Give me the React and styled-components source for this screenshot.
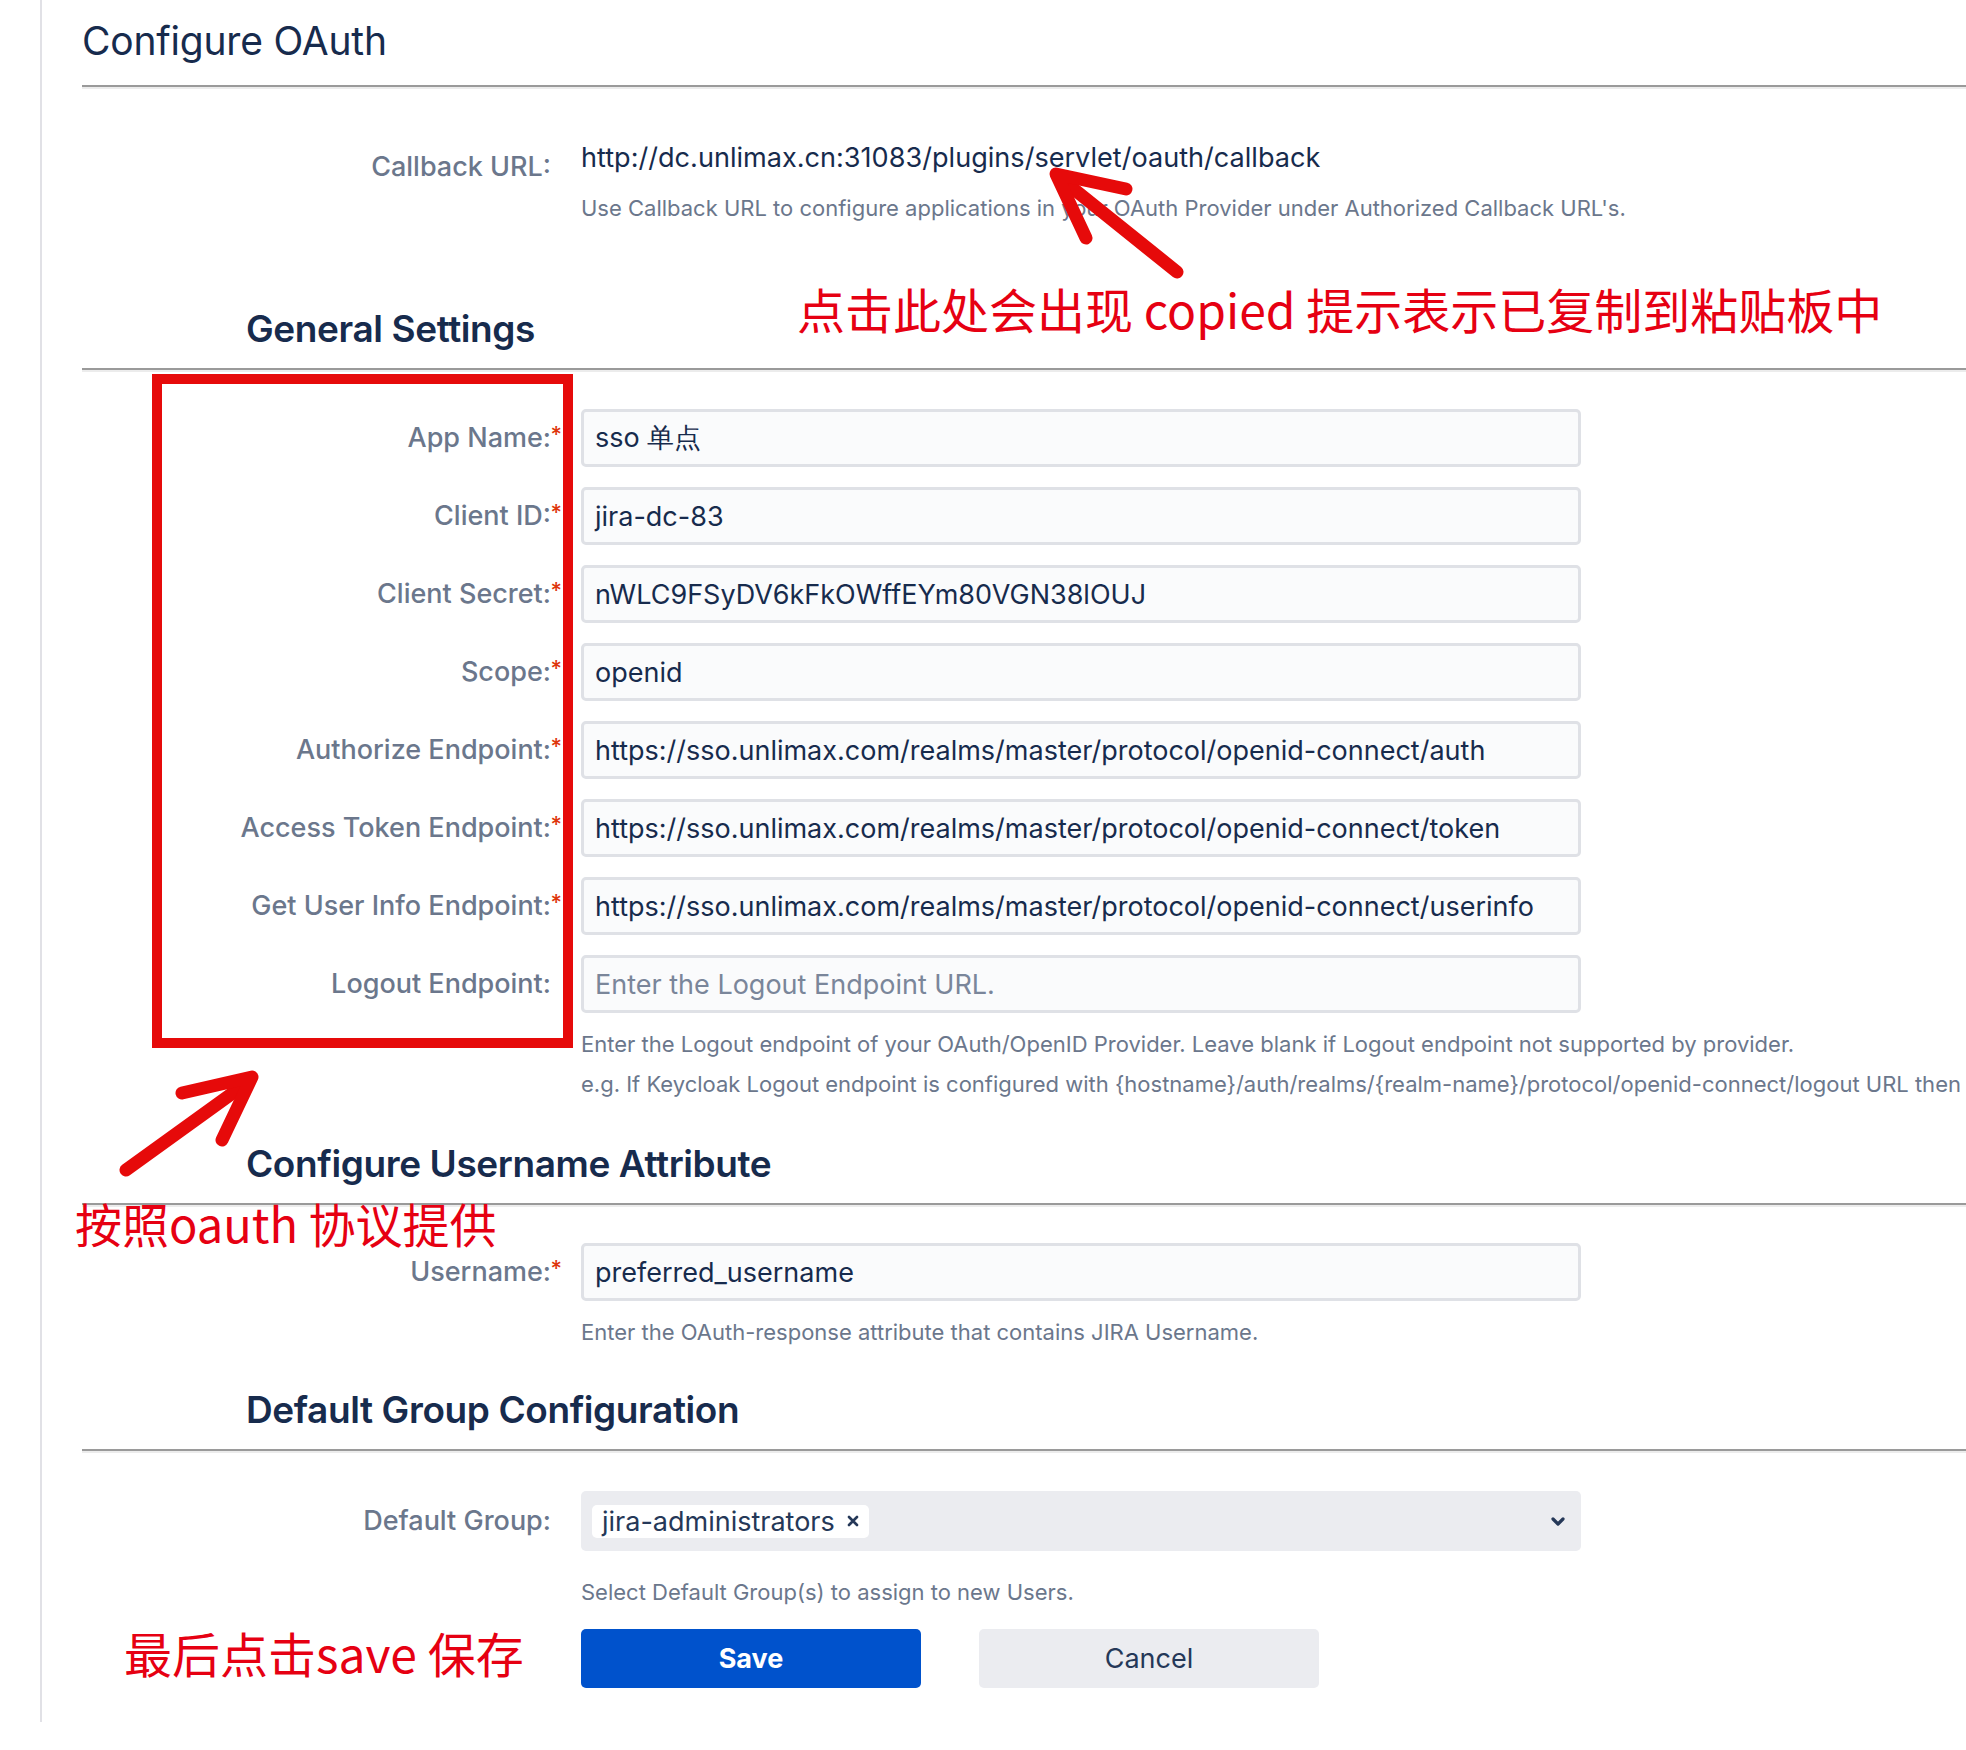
import React from "react";
import styled, { createGlobalStyle } from "styled-components";

const GlobalStyle = createGlobalStyle`
  html, body {
    margin: 0;
    padding: 0;
    background: #ffffff;
    overflow: hidden;
  }
  body {
    font-family: Inter, "Noto Sans", "Liberation Sans", sans-serif;
    color: #172b4d;
  }
`;

const Shell = styled.div`
  position: relative;
  width: 1966px;
  height: 1750px;
  overflow: hidden;
`;

const Page = styled.div`
  margin-left: 40px;
  height: 1722px;
  border-left: 2px solid #e1e1e6;
  padding-left: 40px;
  box-sizing: border-box;
`;

const Title = styled.h2`
  margin: 0;
  padding-top: ${(p) => p.$top}px;
  padding-left: ${(p) => p.$indent || 0}px;
  font-size: ${(p) => p.$size}px;
  font-weight: ${(p) => p.$weight};
  line-height: 44px;
  letter-spacing: ${(p) => p.$spacing || 0}px;
  color: #172b4d;
  white-space: nowrap;
`;

const Rule = styled.div`
  margin-top: ${(p) => p.$gap}px;
  height: 2px;
  background: #9a9a9a;
  border-bottom: 2px solid #ececec;
`;

const Row = styled.div`
  display: grid;
  grid-template-columns: 499px 1000px;
  align-items: ${(p) => (p.$top ? "start" : "center")};
  margin-top: ${(p) => p.$gap || 0}px;
`;

const Label = styled.label`
  position: relative;
  justify-self: end;
  margin-right: 30px;
  padding-top: ${(p) => p.$pad || 0}px;
  font-size: 27px;
  font-weight: 500;
  line-height: 36px;
  color: #6b778c;
  white-space: nowrap;
`;

const Required = styled.span`
  position: absolute;
  right: -11px;
  top: -4px;
  font-size: 22px;
  color: #de350b;
`;

const Value = styled.div`
  font-size: 27.1px;
  line-height: 36px;
  color: #172b4d;
  white-space: nowrap;
`;

const Help = styled.div`
  margin-top: ${(p) => p.$gap || 0}px;
  font-size: 22px;
  line-height: 40px;
  color: #6b778c;
  white-space: nowrap;
`;

const HelpBlock = styled.div`
  margin-left: 499px;
`;

const Fields = styled.div`
  display: flex;
  flex-direction: column;
  gap: 20px;
  margin-top: 37px;
`;

const Input = styled.div`
  box-sizing: border-box;
  height: 58px;
  display: flex;
  align-items: center;
  padding: 0 11px;
  background: #fafbfc;
  border: 3px solid #dfe1e6;
  border-radius: 5px;
  font-size: 27px;
  color: ${(p) => (p.$placeholder ? "#7a869a" : "#172b4d")};
  white-space: nowrap;
`;

const Select = styled.div`
  box-sizing: border-box;
  height: 60px;
  display: flex;
  align-items: center;
  justify-content: space-between;
  padding: 0 16px 0 11px;
  background: #ebecf0;
  border-radius: 5px;
`;

const Tag = styled.span`
  display: inline-flex;
  align-items: center;
  gap: 12px;
  height: 33px;
  padding: 0 10px 0 10px;
  background: #ffffff;
  border-radius: 5px;
  font-size: 27px;
  color: #253858;
`;

const Actions = styled.div`
  display: flex;
  gap: 58px;
  margin-left: 499px;
  margin-top: 17px;
`;

const Button = styled.button`
  width: 340px;
  height: 59px;
  border: none;
  border-radius: 5px;
  font-family: inherit;
  font-size: 27px;
  font-weight: ${(p) => (p.$primary ? 700 : 400)};
  background: ${(p) => (p.$primary ? "#0052cc" : "#ebecf0")};
  color: ${(p) => (p.$primary ? "#ffffff" : "#253858")};
`;

const Mark = styled.div`
  position: absolute;
  left: ${(p) => p.$x}px;
  top: ${(p) => p.$y}px;
  font-family: "Noto Sans CJK SC", "Noto Sans", sans-serif;
  font-size: ${(p) => p.$size}px;
  line-height: 1;
  color: #e60012;
  white-space: nowrap;
`;

const Frame = styled.div`
  position: absolute;
  left: 152px;
  top: 374px;
  width: 421px;
  height: 674px;
  box-sizing: border-box;
  border: 10px solid #e60a0a;
  pointer-events: none;
`;

const Overlay = styled.svg`
  position: absolute;
  left: 0;
  top: 0;
  pointer-events: none;
`;

const fields = [
  ["App Name:", "sso 单点", true],
  ["Client ID:", "jira-dc-83", true],
  ["Client Secret:", "nWLC9FSyDV6kFkOWffEYm80VGN38lOUJ", true],
  ["Scope:", "openid", true],
  ["Authorize Endpoint:", "https://sso.unlimax.com/realms/master/protocol/openid-connect/auth", true],
  ["Access Token Endpoint:", "https://sso.unlimax.com/realms/master/protocol/openid-connect/token", true],
  ["Get User Info Endpoint:", "https://sso.unlimax.com/realms/master/protocol/openid-connect/userinfo", true],
  ["Logout Endpoint:", "", false],
];

const App = () => (
  <Shell>
    <GlobalStyle />
    <Page>
      <Title $top={19} $size={39} $weight={400} $spacing={-0.2}>Configure OAuth</Title>
      <Rule $gap={22} />

      <Row $top $gap={51}>
        <Label $pad={9}>Callback URL:</Label>
        <div>
          <Value>http://dc.unlimax.cn:31083/plugins/servlet/oauth/callback</Value>
          <Help $gap={12}>
            Use Callback URL to configure applications in your OAuth Provider under Authorized Callback URL's.
          </Help>
        </div>
      </Row>

      <Title $top={79} $indent={164} $size={37} $weight={600} $spacing={-0.4}>General Settings</Title>
      <Rule $gap={17} />

      <Fields>
        {fields.map(([label, value, required]) => (
          <Row key={label}>
            <Label>
              {label}
              {required && <Required>*</Required>}
            </Label>
            {value ? (
              <Input>{value}</Input>
            ) : (
              <Input $placeholder>Enter the Logout Endpoint URL.</Input>
            )}
          </Row>
        ))}
      </Fields>
      <HelpBlock>
        <Help $gap={11}>
          Enter the Logout endpoint of your OAuth/OpenID Provider. Leave blank if Logout endpoint not supported by provider.
        </Help>
        <Help>
          e.g. If Keycloak Logout endpoint is configured with {"{hostname}"}/auth/realms/{"{realm-name}"}/protocol/openid-connect/logout URL then
        </Help>
      </HelpBlock>

      <Title $top={38} $indent={164} $size={37} $weight={600} $spacing={-0.4}>Configure Username Attribute</Title>
      <Rule $gap={17} />

      <Row $gap={36}>
        <Label>
          Username:
          <Required>*</Required>
        </Label>
        <Input>preferred_username</Input>
      </Row>
      <HelpBlock>
        <Help $gap={11}>Enter the OAuth-response attribute that contains JIRA Username.</Help>
      </HelpBlock>

      <Title $top={36} $indent={164} $size={37} $weight={600} $spacing={-0.4}>Default Group Configuration</Title>
      <Rule $gap={17} />

      <Row $gap={38}>
        <Label>Default Group:</Label>
        <Select>
          <Tag>
            jira-administrators
            <svg width="12" height="12" viewBox="0 0 12 12">
              <path d="M2 2 L10 10 M10 2 L2 10" stroke="#253858" strokeWidth="2.6" strokeLinecap="round" />
            </svg>
          </Tag>
          <svg width="14" height="9" viewBox="0 0 14 9">
            <path d="M2 2 L7 7 L12 2" fill="none" stroke="#253858" strokeWidth="3.2" strokeLinecap="round" strokeLinejoin="round" />
          </svg>
        </Select>
      </Row>
      <HelpBlock>
        <Help $gap={21}>Select Default Group(s) to assign to new Users.</Help>
      </HelpBlock>

      <Actions>
        <Button $primary>Save</Button>
        <Button>Cancel</Button>
      </Actions>
    </Page>

    <Frame />
    <Mark $x={797} $y={284} $size={48}>点击此处会出现 copied 提示表示已复制到粘贴板中</Mark>
    <Mark $x={75} $y={1199} $size={47}>按照oauth 协议提供</Mark>
    <Mark $x={124} $y={1628} $size={48}>最后点击save 保存</Mark>

    <Overlay width="1966" height="1750" viewBox="0 0 1966 1750">
      <g fill="none" stroke="#e60a0a" strokeWidth="13" strokeLinecap="round" strokeLinejoin="round">
        <path d="M1177 272 L1060 178" />
        <path d="M1086 238 L1056 174 L1126 189" />
        <path d="M126 1170 L248 1082" />
        <path d="M182 1093 L252 1077 L222 1140" />
      </g>
    </Overlay>
  </Shell>
);

export default App;
